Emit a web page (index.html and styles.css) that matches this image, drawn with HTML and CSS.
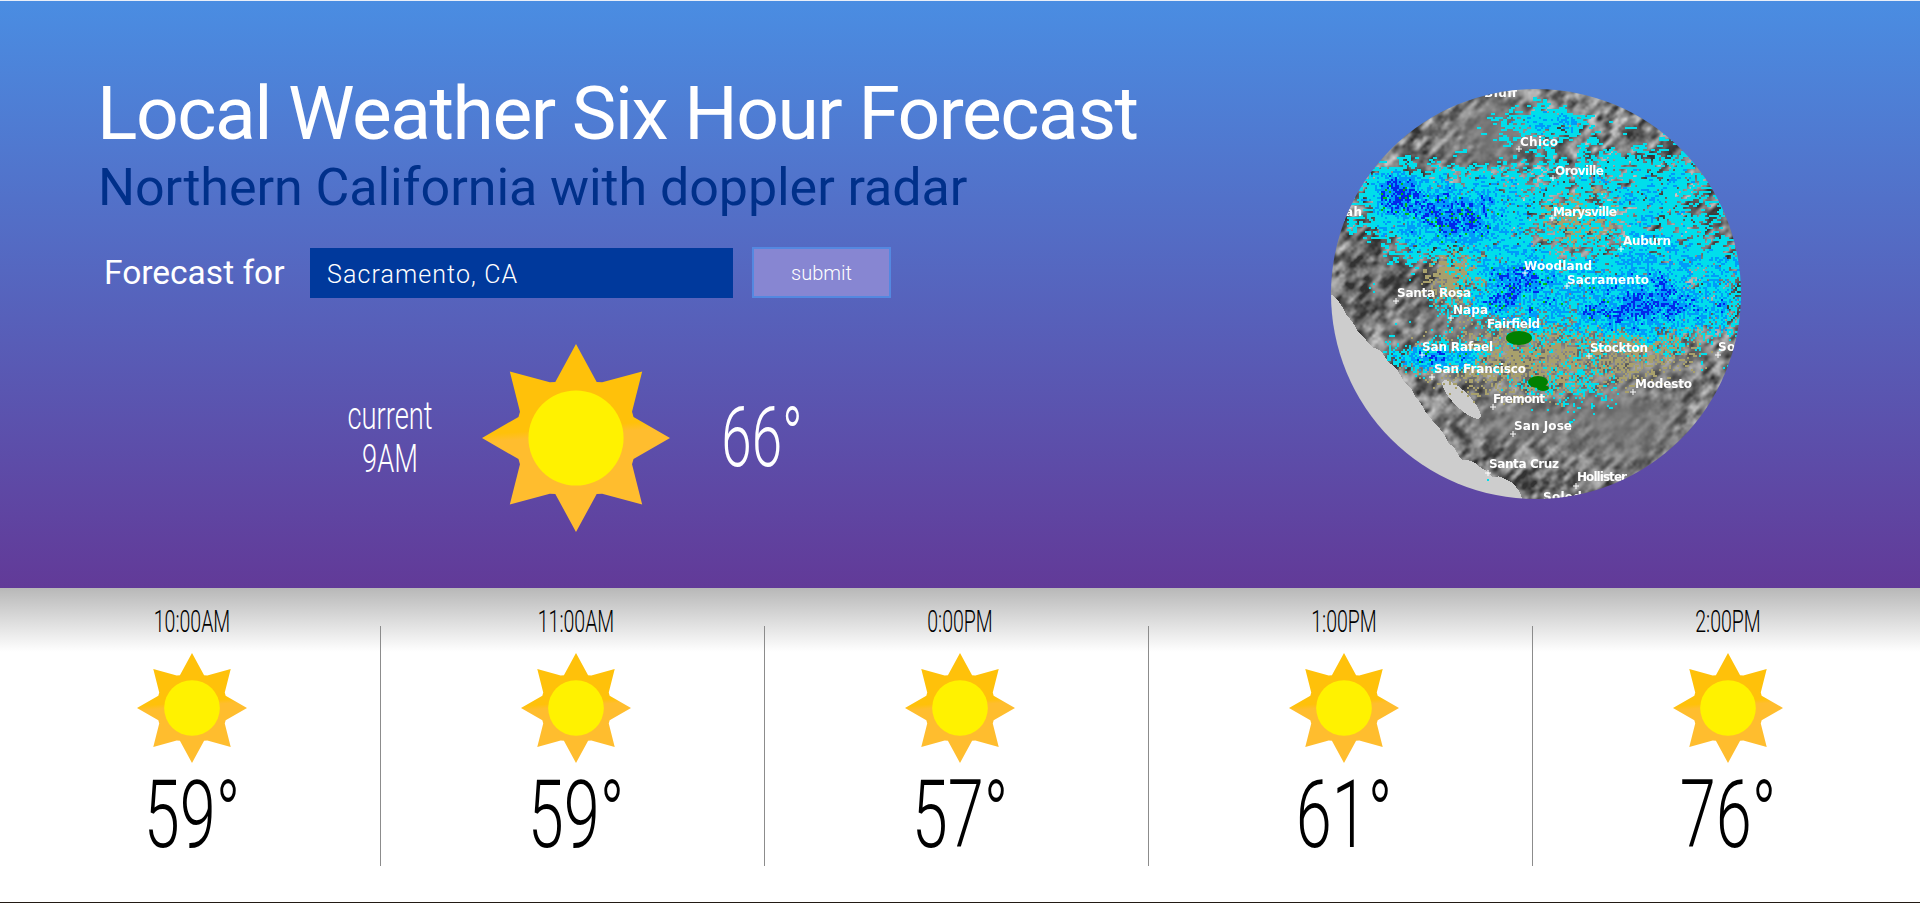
FILE: index.html
```html
<!DOCTYPE html>
<html lang="en">
<head>
    <meta charset="UTF-8">
    <meta name="viewport" content="width=device-width, initial-scale=1.0">
    <title>Local Weather Six Hour Forecast</title>
    <link rel="stylesheet" href="styles.css">
</head>
<body>
    <svg class="defs" width="0" height="0">
        <defs>
            <linearGradient id="rays" x1="0" y1="0" x2="0.08" y2="1">
                <stop offset="0.48" stop-color="#ffc10a"/>
                <stop offset="0.52" stop-color="#ffbd2e"/>
            </linearGradient>
            <symbol id="sun" viewBox="0 0 100 100">
                <path fill="url(#rays)" d="M50 0L61 20.2L63.9 20.4L85.2 14.6L79.8 36L80.6 38.8L100 50L80.6 61.2L79.8 64L85.2 85.4L63.9 79.6L61 79.8L50 100L39 79.8L36.1 79.6L14.8 85.4L20.2 64L19.4 61.2L0 50L19.4 38.8L20.2 36L14.8 14.6L36.1 20.4L39 20.2Z"/>
                <circle cx="50" cy="50" r="25.3" fill="#fff200"/>
            </symbol>
        </defs>
    </svg>
    <header class="top">
        <div class="intro">
            <h1>Local Weather Six Hour Forecast</h1>
            <h2>Northern California with doppler radar</h2>
            <form class="search">
                <label for="city">Forecast for</label>
                <input type="text" id="city" name="city" value="Sacramento, CA">
                <button type="button">submit</button>
            </form>
            <div class="current">
                <p class="when"><span>current</span><span>9AM</span></p>
                <svg class="bigsun"><use href="#sun"/></svg>
                <p class="now"><span>66°</span></p>
            </div>
        </div>
        <div class="radar">
            <canvas id="radar" width="410" height="410"></canvas>
            <svg class="pins" viewBox="1331 89 410 410">
                <path d="M1516 149h6M1519 146v6M1550 178h6M1553 175v6M1549 218h6M1552 215v6M1618 249h6M1621 246v6M1522 273h6M1525 270v6M1564 286h6M1567 283v6M1393 301h6M1396 298v6M1448 318h6M1451 315v6M1419 355h6M1422 352v6M1586 356h6M1589 353v6M1429 377h6M1432 374v6M1630 392h6M1633 389v6M1490 407h6M1493 404v6M1510 434h6M1513 431v6M1485 473h6M1488 470v6M1573 486h6M1576 483v6M1715 355h6M1718 352v6"/>
                <text x="1452" y="97" textLength="65">Red Bluff</text>
                <text x="1520" y="146" textLength="38">Chico</text>
                <text x="1555" y="175" textLength="49">Oroville</text>
                <text x="1553" y="216" textLength="64">Marysville</text>
                <text x="1322" y="216" textLength="40">Ukiah</text>
                <text x="1623" y="245" textLength="48">Auburn</text>
                <text x="1524" y="270" textLength="68">Woodland</text>
                <text x="1567" y="284" textLength="82">Sacramento</text>
                <text x="1397" y="297" textLength="74">Santa Rosa</text>
                <text x="1453" y="314" textLength="35">Napa</text>
                <text x="1487" y="328" textLength="53">Fairfield</text>
                <text x="1422" y="351" textLength="71">San Rafael</text>
                <text x="1590" y="352" textLength="58">Stockton</text>
                <text x="1718" y="351" textLength="50">Sonora</text>
                <text x="1434" y="373" textLength="92">San Francisco</text>
                <text x="1635" y="388" textLength="57">Modesto</text>
                <text x="1493" y="403" textLength="52">Fremont</text>
                <text x="1514" y="430" textLength="58">San Jose</text>
                <text x="1489" y="468" textLength="70">Santa Cruz</text>
                <text x="1577" y="481" textLength="50">Hollister</text>
                <text x="1543" y="501" textLength="56">Soledad</text>
            </svg>
        </div>
    </header>
    <main class="hours">
        <section class="hour">
            <h3><span>10:00AM</span></h3>
            <svg class="smallsun"><use href="#sun"/></svg>
            <p class="temp"><span>59°</span></p>
        </section>
        <section class="hour">
            <h3><span>11:00AM</span></h3>
            <svg class="smallsun"><use href="#sun"/></svg>
            <p class="temp"><span>59°</span></p>
        </section>
        <section class="hour">
            <h3><span>0:00PM</span></h3>
            <svg class="smallsun"><use href="#sun"/></svg>
            <p class="temp"><span>57°</span></p>
        </section>
        <section class="hour">
            <h3><span>1:00PM</span></h3>
            <svg class="smallsun"><use href="#sun"/></svg>
            <p class="temp"><span>61°</span></p>
        </section>
        <section class="hour">
            <h3><span>2:00PM</span></h3>
            <svg class="smallsun"><use href="#sun"/></svg>
            <p class="temp"><span>76°</span></p>
        </section>
    </main>
    <script src="radar.js"></script>
</body>
</html>
```

FILE: styles.css
```css
*{
    box-sizing: border-box;
}
html,body{
    margin: 0;
    height: 903px;
    overflow: hidden;
}
body{
    position: relative;
    background: #fff;
    font-family: Roboto, sans-serif;
    border-bottom: 1px solid #221a14;
}
/* lighter piece in the bottom line */
body::after{
    content: "";
    position: absolute;
    left: 124px;
    bottom: -1px;
    width: 61px;
    height: 1px;
    background: #555;
}
.defs{
    position: absolute;
}
h1,h2,h3,p{
    margin: 0;
    font-weight: normal;
}

/* top part */
.top{
    height: 588px;
    border-top: 1px solid #e8eef8;
    background: linear-gradient(#4a8de2, #623a98);
    display: flex;
    justify-content: space-between;
    padding: 0 179px 0 98px;
}
.intro{
    width: 1060px;
}
h1{
    margin-top: 68px;
    margin-left: -1px;
    font-size: 75px;
    line-height: 88px;
    font-weight: 400;
    color: #fff;
    white-space: nowrap;
    letter-spacing: -1.5px;
}
h2{
    margin-top: 1px;
    font-size: 52px;
    line-height: 60px;
    font-weight: 400;
    color: #00308a;
    white-space: nowrap;
    letter-spacing: -0.07px;
}
.search{
    display: flex;
    align-items: center;
    margin-top: 29px;
    padding-left: 6px;
}
.search label{
    width: 206px;
    font-size: 33.5px;
    font-weight: 400;
    color: #fff;
    white-space: nowrap;
}
.search input{
    width: 423px;
    height: 50px;
    border: 0;
    border-radius: 0;
    padding: 3px 17px 0;
    background: #00399c;
    color: #fff;
    font-family: Roboto, sans-serif;
    font-size: 25px;
    font-weight: 300;
    letter-spacing: 1.1px;
}
.search button{
    width: 139px;
    height: 51px;
    margin-left: 19px;
    border: 2px solid #5488e0;
    border-radius: 0;
    background: #8786d2;
    color: #fff;
    font-family: Roboto, sans-serif;
    font-size: 20px;
    font-weight: 300;
}
.current{
    display: flex;
    align-items: center;
    margin-top: 46px;
    padding-left: 250px;
}
.when{
    width: 84px;
    text-align: center;
    font-size: 39px;
    line-height: 43px;
    font-weight: 300;
    color: #fff;
}
.when span{
    display: block;
    margin: 0 -30px;
    transform: scaleX(0.7);
    white-space: nowrap;
}
.bigsun{
    width: 188px;
    height: 188px;
    margin-left: 50px;
}
.now{
    margin-left: 52px;
    width: 80px;
    text-align: center;
    font-size: 83px;
    font-weight: 300;
    line-height: 90px;
    color: #fff;
}
.now span{
    display: block;
    white-space: nowrap;
    transform: scaleX(0.66);
    margin: 0 -30px;
}

/* radar map */
.radar{
    position: relative;
    flex: none;
    width: 410px;
    height: 410px;
    margin-top: 88px;
    border-radius: 50%;
    overflow: hidden;
}
.radar canvas{
    display: block;
    filter: blur(0.4px);
}
.pins{
    position: absolute;
    top: 0;
    left: 0;
    width: 410px;
    height: 410px;
}
.pins path{
    fill: none;
    stroke: #fff;
    stroke-width: 1;
}
.pins text{
    font-family: "DejaVu Sans", sans-serif;
    font-size: 12px;
    font-weight: bold;
    fill: #fff;
}

/* hourly part */
.hours{
    display: flex;
    height: 314px;
    background: linear-gradient(#b8b8b8, #fff 64px);
    padding-top: 38px;
    text-align: center;
}
.hour{
    flex: 0 0 384px;
    height: 240px;
    padding-left: 7px;
    border-left: 1px solid #8c8c8c;
}
.hour:first-child{
    flex-basis: 380px;
    padding-left: 4px;
    border-left: 0;
}
.hour:last-child{
    flex-basis: 388px;
    padding-right: 4px;
}
.hour h3{
    margin-top: -22px;
    font-size: 31px;
    line-height: 36px;
    font-weight: 300;
    color: #000;
}
.hour h3 span,
.temp span{
    display: block;
    white-space: nowrap;
}
.hour h3 span{
    transform: scaleX(0.63);
}
.smallsun{
    display: block;
    width: 110px;
    height: 110px;
    margin: 13px auto 0;
}
.temp{
    margin-top: 2px;
    font-size: 94px;
    line-height: 100px;
    font-weight: 300;
    color: #000;
}
.temp span{
    transform: scaleX(0.69);
}
```

FILE: radar.js
```js
// draws the radar picture, all made up from noise since there is no image file
const cv = document.getElementById('radar');
const ctx = cv.getContext('2d');
const size = 410;

let seed = 12345;
const rnd = () => {
    seed = (seed * 16807) % 2147483647;
    return seed / 2147483647;
};

// value noise on a wrapping grid
const makeNoise = (cell) => {
    const n = 128;
    const g = [];
    for (let i = 0; i < n * n; i++) g.push(rnd());
    const at = (i, j) => g[(((j % n) + n) % n) * n + ((i % n) + n) % n];
    return (x, y) => {
        const fx = x / cell, fy = y / cell;
        const ix = Math.floor(fx), iy = Math.floor(fy);
        let tx = fx - ix, ty = fy - iy;
        tx = tx * tx * (3 - 2 * tx);
        ty = ty * ty * (3 - 2 * ty);
        const a = at(ix, iy), b = at(ix + 1, iy);
        const c = at(ix, iy + 1), d = at(ix + 1, iy + 1);
        return (a + (b - a) * tx) * (1 - ty) + (c + (d - c) * tx) * ty;
    };
};
const n60 = makeNoise(60), n10 = makeNoise(10), n8 = makeNoise(8), n3 = makeNoise(3);

// blob: [x, y, rx, ry, strength]
const blob = (list, x, y) => {
    let v = 0;
    list.forEach((b) => {
        const dx = (x - b[0]) / b[2], dy = (y - b[1]) / b[3];
        v += b[4] * Math.exp(-(dx * dx + dy * dy));
    });
    return v;
};

const rain = [
    [212, 30, 45, 18, 1],
    [62, 98, 28, 22, 1.25],
    [130, 130, 70, 32, 1.05],
    [190, 185, 60, 30, 1.05],
    [340, 190, 80, 50, 1.2],
    [270, 225, 130, 35, 0.85],
    [320, 100, 80, 50, 0.75],
    [105, 268, 48, 14, 1.2],
    [240, 300, 55, 25, 0.55],
    [160, 90, 90, 30, 0.4],
    [55, 140, 50, 40, 0.45],
    [150, 215, 40, 14, 0.45]
];
const tan = [
    [205, 270, 105, 36, 0.85],
    [122, 190, 30, 24, 0.9],
    [245, 130, 35, 28, 0.65],
    [320, 255, 50, 25, 0.5]
];
const flats = [
    [165, 40, 45, 32, 1],
    [290, 335, 60, 45, 0.9],
    [180, 335, 45, 22, 0.75],
    [220, 230, 130, 60, 0.9]
];
const darks = [
    [50, 190, 60, 32, 1],
    [165, 400, 90, 35, 0.5]
];
const coast = [[0, 205], [29, 244], [60, 275], [89, 314], [102, 334], [125, 364], [165, 387], [182, 397], [195, 412]];

const coastY = (x) => {
    for (let i = 1; i < coast.length; i++) {
        if (x <= coast[i][0]) {
            const a = coast[i - 1], b = coast[i];
            return a[1] + (b[1] - a[1]) * (x - a[0]) / (b[0] - a[0]);
        }
    }
    return 9999;
};
const isSea = (x, y) => y > coastY(x) + (n10(x, y) - 0.5) * 7;
const isBay = (x, y) => {
    const dx = x - 130, dy = y - 310;
    const u = (dx + dy) / 1.41 / 26, v = (dx - dy) / 1.41 / 8;
    return u * u + v * v < 1;
};

const img = ctx.createImageData(size, size);

const put = (x, y, c) => {
    const i = (y * size + x) * 4;
    img.data[i] = c[0]; img.data[i + 1] = c[1]; img.data[i + 2] = c[2]; img.data[i + 3] = 255;
};

// flat valley grey against ridged mountain grey
for (let y = 0; y < size; y++) {
    for (let x = 0; x < size; x++) {
        const flat = Math.min(1, blob(flats, x, y));
        const rough = 1 - flat * 0.88;
        // short ridges along a diagonal
        const u = (x - y) * 0.65 + 500, v = (x + y) * 1.2 + 500;
        const ridge = n8(u, v) - 0.5;
        const fine = n3(x, y) - 0.5;
        let g = 122 + ridge * 150 * rough + fine * 35 * rough - blob(darks, x, y) * 30;
        g = Math.max(50, Math.min(205, g));
        let c = [g, g, g];
        if (isSea(x, y) || isBay(x, y)) c = [205, 205, 205];
        put(x, y, c);
    }
}

for (let y = 0; y < size; y += 2) {
    for (let x = 0; x < size; x += 2) {
        const sea = isSea(x, y);
        const r = blob(rain, x, y) * (0.7 + n60(x, y) * 0.6) * (sea ? 0.25 : 1);
        const t = sea ? 0 : blob(tan, x, y);
        const v = r + (n10(x, y) - 0.5) * 0.5 + (rnd() - 0.5) * 0.8;
        let c = null;
        if (v > 1.45) c = [0, 40, 235];
        else if (v > 1.05) c = [0, 155, 250];
        else if (v > 0.62) c = [0, 222, 235];
        else if (t + (rnd() - 0.5) * 1 > 0.62) c = [168, 160, 108];
        if (c && v > 1.3 && x < 280 && rnd() > 0.9) c = [0, 190, 20];
        if (c) {
            const w = y < 190 ? 4 : 2;
            for (let a = 0; a < w; a++) {
                for (let b = 0; b < 2; b++) {
                    if (x + a < size && y + b < size) put(x + a, y + b, c);
                }
            }
        }
    }
}

ctx.putImageData(img, 0, 0);

// green patches near the delta
ctx.fillStyle = '#008000';
[[188, 249, 13, 7], [207, 293, 10, 6], [212, 299, 6, 3]].forEach((p) => {
    ctx.beginPath();
    ctx.ellipse(p[0], p[1], p[2], p[3], 0, 0, Math.PI * 2);
    ctx.fill();
});
```
